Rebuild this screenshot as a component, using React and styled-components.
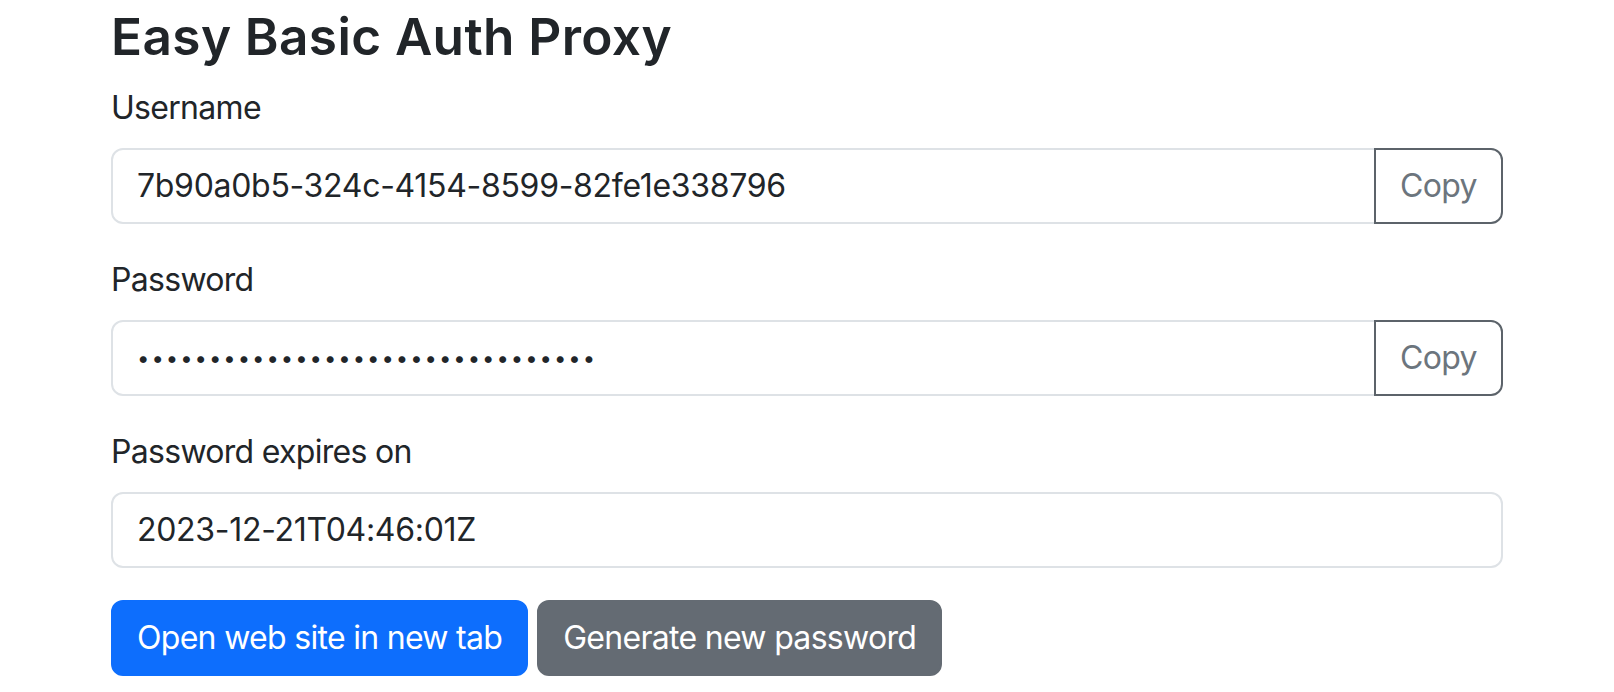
import styled, { createGlobalStyle } from "styled-components";

const GlobalStyle = createGlobalStyle`
    body {
        margin: 0;
        background: #fff;
        font-family: Inter, "Noto Sans", "Liberation Sans", sans-serif;
        color: #212529;
    }
    * { box-sizing: border-box; }
`;

const fields = [
    { id: "username", label: "Username", type: "text", value: "7b90a0b5-324c-4154-8599-82fe1e338796", copy: true },
    { id: "password", label: "Password", type: "password", value: "d41f9c0e8a7b4e21b6c35f0a9e2d7c18", copy: true },
    { id: "expires", label: "Password expires on", type: "text", value: "2023-12-21T04:46:01Z", copy: false },
];

const App = () => {
    return (
        <>
            <GlobalStyle />
            <Container>
                <Title>Easy Basic Auth Proxy</Title>
                {fields.map((field) => (
                    <Field key={field.id}>
                        <Label htmlFor={field.id}>{field.label}</Label>
                        <InputGroup>
                            <Input
                                id={field.id}
                                type={field.type}
                                defaultValue={field.value}
                                readOnly
                                $grouped={field.copy}
                                $password={field.type === "password"}
                            />
                            {field.copy && <CopyButton type="button">Copy</CopyButton>}
                        </InputGroup>
                    </Field>
                ))}
                <Actions>
                    <Button type="button" $variant="primary">Open web site in new tab</Button>
                    <Button type="button" $variant="secondary">Generate new password</Button>
                </Actions>
            </Container>
        </>
    );
};

const Container = styled.div`
    max-width: 1440px;
    margin: 0 auto;
    padding: 6px 24px 0;
`;

const Title = styled.h3`
    font-size: 51.3px;
    font-weight: 600;
    line-height: 1.2;
    letter-spacing: 0.4px;
    margin: 0 0 16px;
    color: #212529;
`;

const Field = styled.div`
    margin-bottom: 32px;
`;

const Label = styled.label`
    display: block;
    font-size: 32px;
    line-height: 48px;
    letter-spacing: -0.7px;
    margin-bottom: 16px;
`;

const InputGroup = styled.div`
    display: flex;
    align-items: stretch;
`;

const Input = styled.input`
    flex: 1;
    min-width: 0;
    font-family: inherit;
    font-size: ${(p) => (p.$password ? "22px" : "32px")};
    line-height: 48px;
    height: 76px;
    padding: 12px 24px;
    color: #212529;
    background: #fff;
    border: 2px solid #dee2e6;
    border-radius: ${(p) => (p.$grouped ? "12px 0 0 12px" : "12px")};
    outline: none;
    letter-spacing: ${(p) => (p.$password ? "2px" : "-0.3px")};
`;

const CopyButton = styled.button`
    font-family: inherit;
    font-size: 32px;
    line-height: 48px;
    letter-spacing: -0.6px;
    padding: 12px 24px;
    margin-left: -2px;
    color: #6c757d;
    background: transparent;
    border: 2px solid #5c636a;
    border-radius: 0 12px 12px 0;
    cursor: pointer;
`;

const Actions = styled.div`
    display: flex;
    gap: 9px;
`;

const Button = styled.button`
    font-family: inherit;
    font-size: 32px;
    line-height: 48px;
    letter-spacing: -0.7px;
    padding: 12px 24px;
    color: #fff;
    background: ${(p) => (p.$variant === "primary" ? "#0d6efd" : "#646b73")};
    border: 2px solid ${(p) => (p.$variant === "primary" ? "#0d6efd" : "#646b73")};
    border-radius: 12px;
    cursor: pointer;
`;

export default App;
